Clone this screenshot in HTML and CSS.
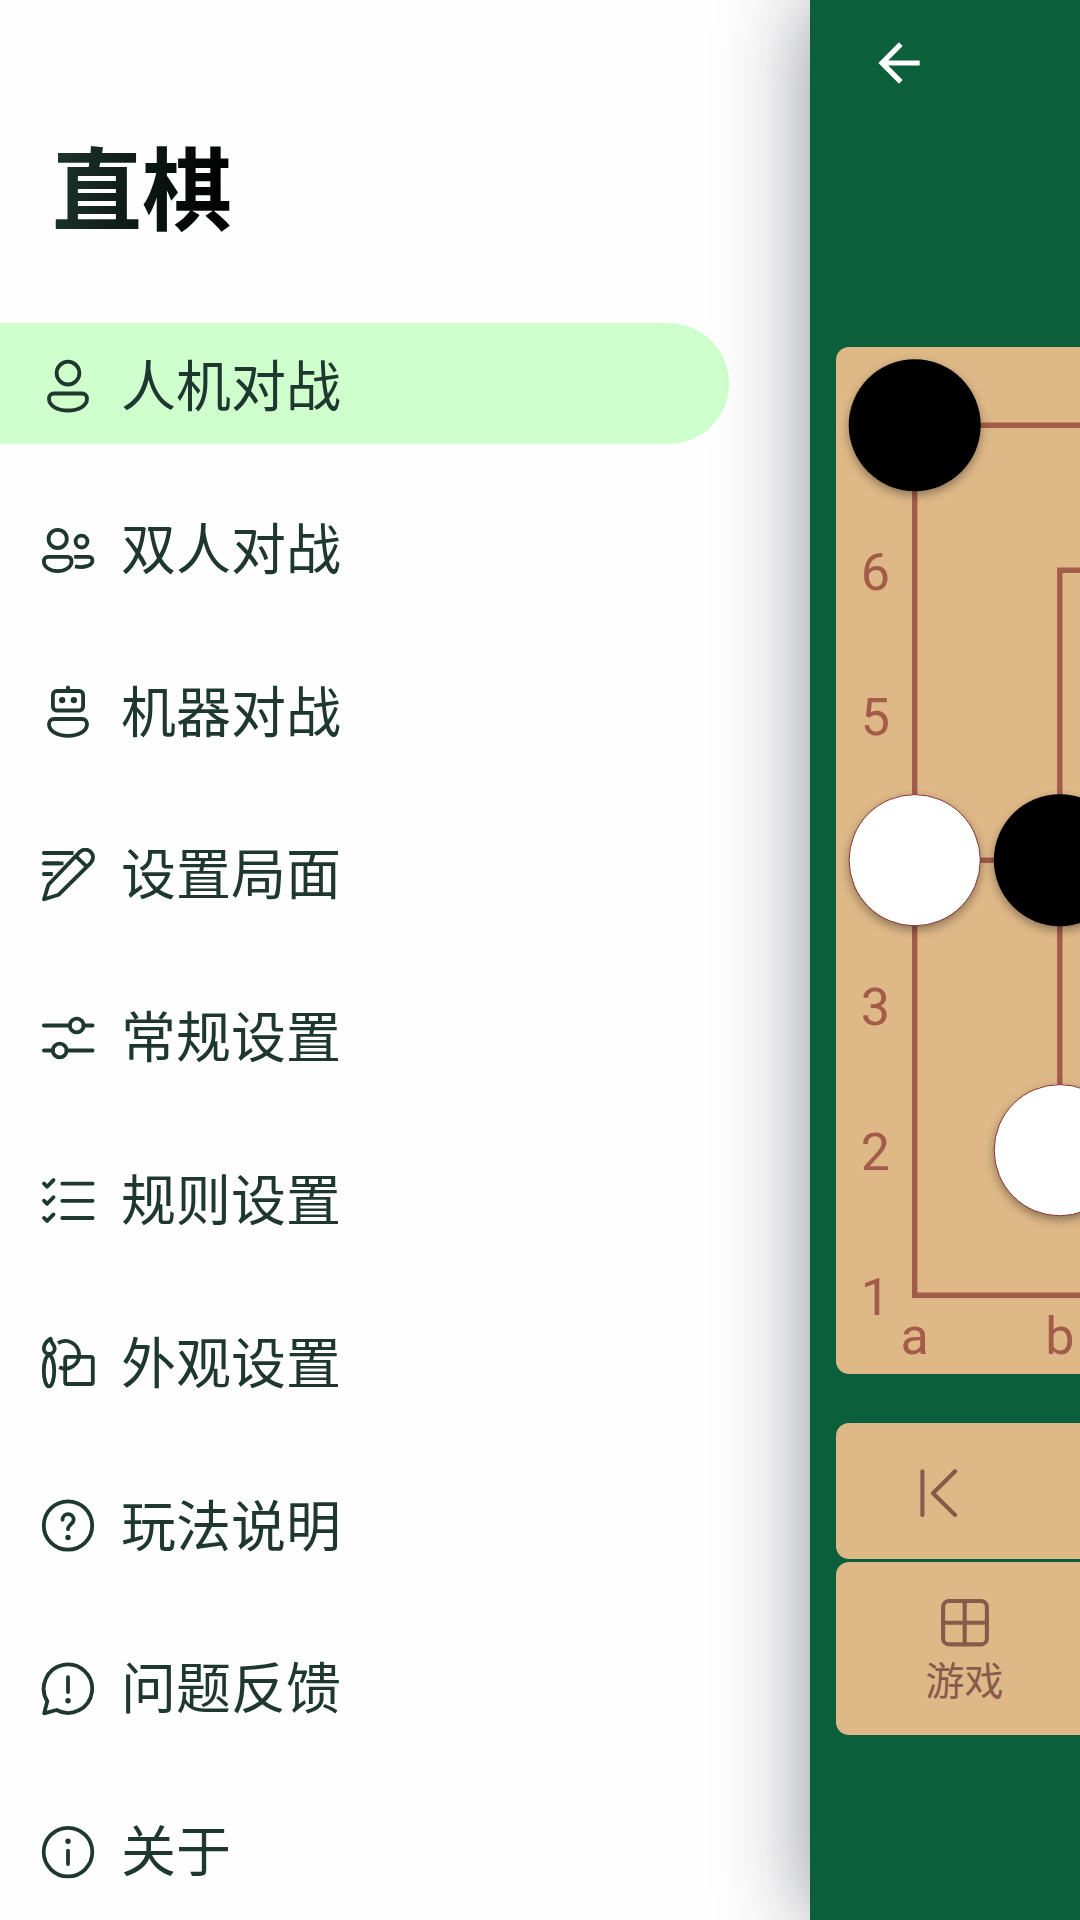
FILE: index.html
```html
<!DOCTYPE html>
<html lang="zh-CN">
<head>
<meta charset="utf-8">
<title>直棋</title>
<link rel="stylesheet" href="styles.css">
</head>
<body>
<div class="app">
  <nav class="drawer">
    <h1 class="title"><span class="title-text">直棋</span></h1>
    <ul class="menu">
      <li class="item active">
        <svg class="icon" viewBox="0 0 54 54"><circle cx="27" cy="14.1" r="11.4"/><path d="M13 34.5H41a5 5 0 0 1 5 5C46 47 37.5 51.5 27 51.5S8 47 8 39.5a5 5 0 0 1 5-5z"/></svg>
        <span class="name">人机对战</span>
      </li>
      <li class="item">
        <svg class="icon" viewBox="0 0 54 54"><circle cx="16.7" cy="16.9" r="9.1"/><circle cx="40.5" cy="19.6" r="5.9"/><path d="M7 34.8H26.5a4 4 0 0 1 4 4.4C30.5 45.5 24 49.1 16.7 49.1S2.9 45.5 2.9 39.2a4.2 4.2 0 0 1 4.1-4.4z"/><path class="butt" d="M33.2 34.8H48a3.6 3.6 0 0 1 3.4 4C51.4 43.9 42.5 46.2 34 44.4"/></svg>
        <span class="name">双人对战</span>
      </li>
      <li class="item">
        <svg class="icon" viewBox="0 0 54 54"><rect x="11.9" y="6" width="30.2" height="19.5" rx="4"/><path d="M27 2.3V6"/><circle class="dot" cx="21.2" cy="15.1" r="3.2"/><circle class="dot" cx="32.9" cy="15.1" r="3.2"/><path d="M13 34H41a5 5 0 0 1 5 5C46 46.4 37.5 50.9 27 50.9S8 46.4 8 39a5 5 0 0 1 5-5z"/></svg>
        <span class="name">机器对战</span>
      </li>
      <li class="item">
        <svg class="icon" viewBox="0 0 54 54"><path d="M3 51.3L7.4 36.7L38.8 3.9A7.7 7.7 0 0 1 49.8 14.8L17.7 46.7z"/><path class="butt" d="M35 8.3L45.7 18.6M2.9 5H32.5M2.9 15.4H22.5M2.9 26H11.8"/><path d="M2.9 5H28M2.9 15.4H18M2.9 26H8"/></svg>
        <span class="name">设置局面</span>
      </li>
      <li class="item">
        <svg class="icon" viewBox="0 0 54 54"><path d="M2.9 14.5H28.7M42.5 14.5H51.6M2.9 39.5H11.7M25.5 39.5H51.6"/><circle cx="35.7" cy="14.5" r="6.9"/><circle cx="18.7" cy="39.5" r="6.9"/></svg>
        <span class="name">常规设置</span>
      </li>
      <li class="item">
        <svg class="icon" viewBox="0 0 54 54"><path d="M21.3 10.7H51.6M21.3 27.8H51.6M21.3 45H51.6M3 10.6l3.1 3.1l6.4-6.6M3 27.7l3.1 3.1l6.4-6.6M3 44.9l3.1 3.1l6.4-6.6"/></svg>
        <span class="name">规则设置</span>
      </li>
      <li class="item">
        <svg class="icon" viewBox="0 0 54 54"><ellipse cx="8" cy="34.9" rx="5.2" ry="15.5"/><path d="M9.6 2.6C5.4 5.4 2.7 9 2.8 12.5a5.4 5.4 0 0 0 10.9 0C13.6 8.7 10 7.4 9.6 2.6z"/><path class="butt" d="M17 7.1A13.8 13.8 0 1 1 18.2 31.2"/><rect x="24.2" y="20.8" width="27.6" height="27.2" rx="2"/></svg>
        <span class="name">外观设置</span>
      </li>
      <li class="item">
        <svg class="icon" viewBox="0 0 54 54"><circle cx="27" cy="26.5" r="24.2"/><path d="M21.5 20.7a5.6 5.6 0 0 1 11.2 0C32.7 24.6 27 25.7 27 30.2"/><circle class="dot" cx="27" cy="38.5" r="2.7"/></svg>
        <span class="name">玩法说明</span>
      </li>
      <li class="item">
        <svg class="icon" viewBox="0 0 54 54"><path d="M6.3 39.3A24.2 24.2 0 1 1 15.5 48L3.2 51.3z"/><path d="M27 15.2V30"/><circle class="dot" cx="27" cy="38.7" r="2.7"/></svg>
        <span class="name">问题反馈</span>
      </li>
      <li class="item">
        <svg class="icon" viewBox="0 0 54 54"><circle cx="27" cy="27.1" r="24.3"/><path d="M27 25.7V39"/><circle class="dot" cx="27" cy="16.3" r="2.7"/></svg>
        <span class="name">关于</span>
      </li>
    </ul>
  </nav>
  <main class="page">
    <header class="topbar">
      <svg class="back" viewBox="0 0 24 24"><path d="M20 11H7.83l5.59-5.59L12 4l-8 8 8 8 1.41-1.41L7.83 13H20z"/></svg>
    </header>
    <svg class="board" viewBox="0 0 1028 1027">
      <path class="grid" d="M78.7 78.2H948.7V948.2H78.7zM223.8 223.2H803.7V803.2H223.8zM78.7 513.2H368.8"/>
      <g class="label">
        <text x="39.3" y="242.6">6</text>
        <text x="39.3" y="387.6">5</text>
        <text x="39.3" y="677.6">3</text>
        <text x="39.3" y="822.6">2</text>
        <text x="39.3" y="967.6">1</text>
        <text x="78.7" y="1006.8">a</text>
        <text x="223.8" y="1006.8">b</text>
      </g>
      <circle class="stone black" cx="78.7" cy="78.2" r="66"/>
      <circle class="stone white" cx="78.7" cy="513.2" r="65.6"/>
      <circle class="stone black" cx="223.8" cy="513.2" r="66"/>
      <circle class="stone white" cx="223.8" cy="803.2" r="65.6"/>
    </svg>
    <div class="panel history">
      <div class="step"><svg class="first" viewBox="0 0 38 48"><path d="M2.4 2.2V46M35.1 2.2L13 24.3L35.1 46"/></svg></div>
    </div>
    <div class="panel tools">
      <div class="tool">
        <svg class="game" viewBox="0 0 48 48"><rect x="2.1" y="2" width="43.8" height="43.4" rx="6"/><path d="M23.7 2V45.4M2 23.7H46"/></svg>
        <span>游戏</span>
      </div>
    </div>
  </main>
</div>
</body>
</html>
```
FILE: styles.css
```css
* { box-sizing: border-box; }

body {
  margin: 0;
  overflow: hidden;
  font-family: Roboto, "Noto Sans CJK SC", sans-serif;
}

.app {
  display: flex;
  width: 1080px;
  height: 1920px;
  overflow: hidden;
}

.drawer {
  flex: 0 0 810px;
  background: #fefefe;
  color: #1e372f;
}

.title {
  margin: 0;
  height: 323px;
  padding: 119px 0 0 52px;
  font-family: "Noto Sans CJK SC", sans-serif;
  font-size: 90px;
  font-weight: 700;
  line-height: 130px;
}

.title-text {
  display: inline-block;
  background: linear-gradient(100deg, #1e372f 0%, #000 90%);
  -webkit-background-clip: text;
  background-clip: text;
  color: transparent;
}

.menu {
  display: flex;
  flex-direction: column;
  gap: 42.3px;
  margin: 0;
  padding: 0;
  list-style: none;
}

.item {
  display: flex;
  align-items: center;
  gap: 26px;
  width: 729px;
  height: 120.5px;
  padding: 6.4px 0 0 41px;
  border-radius: 0 60.25px 60.25px 0;
  font-family: "Noto Sans CJK SC", sans-serif;
  font-size: 55px;
  line-height: 80px;
}

.name { padding-bottom: 9px; }

.active { background: #d0ffce; }

.icon {
  flex: none;
  width: 54px;
  height: 54px;
  fill: none;
  stroke: #1e372f;
  stroke-width: 3.8;
  stroke-linecap: round;
  stroke-linejoin: round;
}

.icon .butt { stroke-linecap: butt; }
.icon .dot { fill: #1e372f; stroke: none; }

.page {
  display: flex;
  flex: 0 0 1080px;
  flex-direction: column;
  height: 1920px;
  padding-left: 26px;
  background: #0b5f3a;
  box-shadow: 0 0 82px rgba(12, 18, 32, 0.46);
}

.topbar {
  height: 347px;
  padding: 32px 0 0 32px;
}

.back {
  display: block;
  width: 62px;
  height: 62px;
  fill: #fff;
}

.board {
  display: block;
  flex: none;
  width: 1028px;
  height: 1027px;
  border-radius: 13px;
  background: #deb887;
}

.grid {
  fill: none;
  stroke: #a35b4a;
  stroke-width: 5.4;
}

.label {
  fill: #a35b4a;
  font-family: Roboto, sans-serif;
  font-size: 52px;
  text-anchor: middle;
}

.stone { filter: drop-shadow(0 4px 5px rgba(0, 0, 0, 0.35)); }
.black { fill: #000; }
.white { fill: #fff; stroke: #842f2f; stroke-width: 1; }

.panel {
  display: flex;
  align-items: center;
  width: 1028px;
  border-radius: 13px;
  background: #deb887;
  color: #875b4a;
}

.panel svg {
  fill: none;
  stroke: #875b4a;
  stroke-width: 4.1;
  stroke-linecap: round;
  stroke-linejoin: round;
}

.history {
  height: 136px;
  margin-top: 49px;
}

.step {
  display: flex;
  justify-content: center;
  width: 205.6px;
  padding-top: 4px;
}

.first { width: 38px; height: 48px; }

.tools {
  align-items: flex-start;
  height: 173px;
  margin-top: 3px;
}

.tool {
  display: flex;
  flex-direction: column;
  align-items: center;
  width: 257px;
  padding-top: 37px;
  font-family: "Noto Sans CJK SC", sans-serif;
  font-size: 39px;
  line-height: 56px;
}

.game { width: 48px; height: 48px; margin-bottom: 3px; }
```
